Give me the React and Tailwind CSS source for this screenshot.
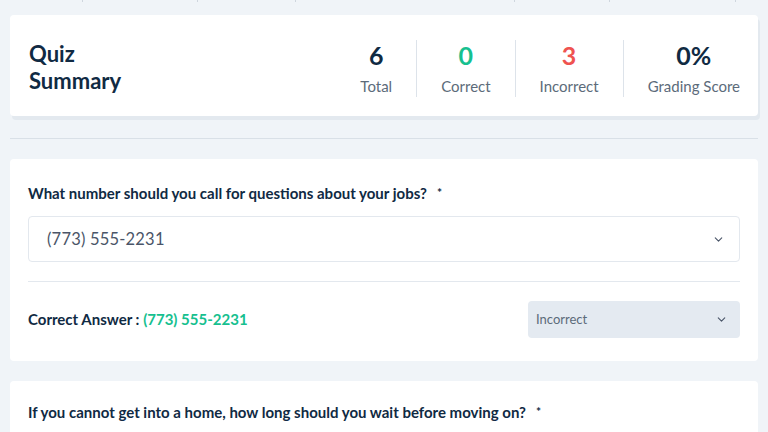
import React from "react";

const Chevron = ({ className }) => (
  <svg
    viewBox="0 0 24 24"
    width="13"
    height="13"
    fill="none"
    stroke="currentColor"
    strokeWidth="2"
    strokeLinecap="round"
    strokeLinejoin="round"
    className={className}
  >
    <path d="M6 9l6 6 6-6" />
  </svg>
);

const stats = [
  { value: "6", label: "Total", color: "text-[#102a43]" },
  { value: "0", label: "Correct", color: "text-[#16c08f]" },
  { value: "3", label: "Incorrect", color: "text-[#ef5350]" },
  { value: "0%", label: "Grading Score", color: "text-[#102a43]" },
];

const App = () => {
  return (
    <div
      className="min-h-[432px] bg-[#f0f4f8] overflow-hidden"
      style={{ fontFamily: "Lato, 'Open Sans', sans-serif" }}
    >
      {/* bottom edge of the table above */}
      <div className="flex h-[2px]">
        <div className="w-[83px] border-r border-[#cfd6de]" />
        <div className="w-[115px] border-r border-[#cfd6de]" />
        <div className="w-[98px] border-r border-[#cfd6de]" />
        <div className="w-[219px] border-r border-[#cfd6de]" />
        <div className="w-[95px] border-r border-[#cfd6de]" />
        <div className="w-[126px] border-r border-[#cfd6de]" />
      </div>

      <div className="px-[10px] pt-[13px]">
        {/* Quiz summary */}
        <div className="bg-white rounded-[4px] shadow-[2px_4px_0_#e3e9ef] h-[101px] flex items-center pl-[19px] pt-[6px]">
          <h2 className="text-[22px] leading-[27px] font-bold text-[#102a43] flex-1 -mt-[3px]">
            Quiz
            <br />
            Summary
          </h2>
          <div className="flex items-stretch h-[57px]">
            {stats.map((s, i) => (
              <div
                key={s.label}
                className={
                  i === 0
                    ? "pl-6 pr-6 flex flex-col items-center"
                    : i === 3
                    ? "pl-6 pr-[18px] flex flex-col items-center border-l border-[#dde3ea]"
                    : "pl-6 pr-6 flex flex-col items-center border-l border-[#dde3ea]"
                }
              >
                <div className={`text-[25px] leading-[30px] font-bold ${s.color}`}>
                  {s.value}
                </div>
                <div className="text-[15px] leading-[20px] text-[#5c6b7a] mt-[6px] whitespace-nowrap">
                  {s.label}
                </div>
              </div>
            ))}
          </div>
        </div>

        <div className="mt-[22px] border-t border-[#d9e0e7]" />

        {/* Question 1 */}
        <div className="mt-[20px] bg-white rounded-[4px] px-[18px] pt-[24px] pb-[23px]">
          <p className="text-[15px] leading-[20px] font-bold text-[#102a43]">
            What number should you call for questions about your jobs?
            <span className="ml-[10px] text-[12px] align-top">*</span>
          </p>
          <div className="mt-[13px] h-[46px] border border-[#e3e8ee] rounded-[4px] flex items-center justify-between pl-[18px] pr-[14px]">
            <span className="text-[16.5px] tracking-[0.2px] text-[#4a5568]">(773) 555-2231</span>
            <Chevron className="text-[#4a5568]" />
          </div>
          <div className="mt-[19px] border-t border-[#e3e8ee]" />
          <div className="mt-[19px] flex items-center justify-between">
            <p className="text-[15px] font-bold text-[#102a43]">
              Correct Answer :{" "}
              <span className="text-[#16c08f]">(773) 555-2231</span>
            </p>
            <div className="w-[212px] h-[37px] bg-[#e4eaf1] rounded-[4px] flex items-center justify-between pl-[8px] pr-[12px]">
              <span className="text-[13px] text-[#5c6b7a]">Incorrect</span>
              <Chevron className="text-[#4a5568]" />
            </div>
          </div>
        </div>

        {/* Question 2 */}
        <div className="mt-[20px] bg-white rounded-[4px] px-[18px] pt-[21px] pb-[24px]">
          <p className="text-[15px] leading-[20px] font-bold text-[#102a43]">
            If you cannot get into a home, how long should you wait before moving on?
            <span className="ml-[10px] text-[12px] align-top">*</span>
          </p>
        </div>
      </div>
    </div>
  );
};

export default App;
